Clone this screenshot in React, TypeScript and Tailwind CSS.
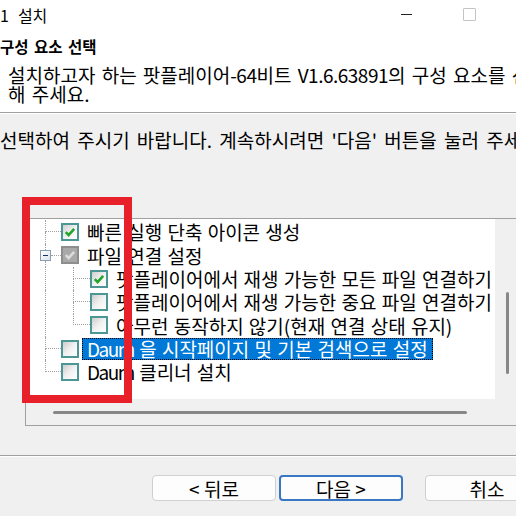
import React from "react";

type CB = "on" | "off" | "mixed";

function Check({ color }: { color: string }) {
  return (
    <svg width="12" height="12" viewBox="0 0 12 12">
      <polyline points="1.8,6.2 4.6,9 10.2,2.8" fill="none" stroke={color} strokeWidth="2.6" />
    </svg>
  );
}

function Box({ state }: { state: CB }) {
  if (state === "mixed")
    return (
      <div className="w-[18px] h-[18px] shrink-0 border-2 border-[#8e8e8e] bg-[#a9a9a9] flex items-center justify-center">
        <Check color="#dcdcdc" />
      </div>
    );
  return (
    <div className="w-[18px] h-[18px] shrink-0 border-2 border-[#4a9795] bg-linear-to-br from-[#cdcdcd] via-[#f1f1f1] to-white flex items-center justify-center">
      {state === "on" && <Check color="#22a52a" />}
    </div>
  );
}

function RootGutter({ kind }: { kind: "branch" | "last" | "pass" | "minus" }) {
  if (kind === "minus")
    return (
      <div className="w-[35px] h-full shrink-0 flex">
        <div className="w-[14px]" />
        <div className="w-[11px] h-full flex flex-col items-center">
          <div className="flex-1 w-0 border-l border-dotted border-[#a0a0a0]" />
          <div className="w-[11px] h-[11px] shrink-0 border border-[#8a9db6] bg-linear-to-br from-white to-[#dde3ea] flex items-center justify-center">
            <div className="w-[5px] h-[1px] bg-[#1c3764]" />
          </div>
          <div className="flex-1 w-0 border-l border-dotted border-[#a0a0a0]" />
        </div>
        <div className="flex-1 flex items-center">
          <div className="w-full border-t border-dotted border-[#a0a0a0]" />
        </div>
      </div>
    );
  if (kind === "pass")
    return (
      <div className="w-[35px] h-full shrink-0 flex">
        <div className="w-[19px]" />
        <div className="h-full border-l border-dotted border-[#a0a0a0]" />
      </div>
    );
  return (
    <div className="w-[35px] h-full shrink-0 flex">
      <div className="w-[19px]" />
      <div className="flex-1 flex flex-col">
        <div className="h-1/2 border-l border-b border-dotted border-[#a0a0a0]" />
        {kind === "branch" ? (
          <div className="h-1/2 border-l border-dotted border-[#a0a0a0]" />
        ) : (
          <div className="h-1/2" />
        )}
      </div>
    </div>
  );
}

function ChildGutter({ last }: { last: boolean }) {
  return (
    <div className="w-[29px] h-full shrink-0 flex">
      <div className="w-[12px]" />
      <div className="flex-1 flex flex-col">
        <div className="h-1/2 border-l border-b border-dotted border-[#a0a0a0]" />
        {last ? <div className="h-1/2" /> : <div className="h-1/2 border-l border-dotted border-[#a0a0a0]" />}
      </div>
    </div>
  );
}

function Label({ children, selected }: { children: React.ReactNode; selected?: boolean }) {
  if (selected)
    return (
      <div className="ml-[3px] h-[22px] px-[4px] flex items-center border border-dotted border-black bg-[#0078d7] text-white whitespace-nowrap">
        {children}
      </div>
    );
  return (
    <div className="ml-[3px] h-[22px] px-[4px] flex items-center border border-transparent text-black whitespace-nowrap">
      {children}
    </div>
  );
}

export default function App() {
  const row = "h-[23.33px] flex items-center";
  return (
    <div className="w-[516px] h-[516px] overflow-hidden relative bg-[#f0f0f0] font-['Noto_Sans_CJK_KR','Noto_Sans',sans-serif] text-black">
      {/* title + header */}
      <div className="bg-white h-[113px] border-b border-[#a0a0a0]">
        <div className="h-[29px] flex items-center text-[16px] leading-none">
          <span className="ml-0">1</span>
          <span className="ml-[9px]">설치</span>
          <div className="ml-auto flex items-center gap-[51px] pr-[40px]">
            <div className="w-[11px] h-[1px] bg-[#222]" />
            <div className="w-[13px] h-[13px] border border-[#c4c4c4] rounded-[1px]" />
          </div>
        </div>
        <div className="mt-[7px] h-[22px] flex items-center text-[15.5px] font-bold leading-none [word-spacing:2px] whitespace-nowrap">
          구성 요소 선택
        </div>
        <div className="mt-[7px] pl-[8px] text-[19px] leading-[19px] [word-spacing:2px] whitespace-nowrap">
          <div className="h-[19px]">
            설치하고자 하는 팟플레이어<span className="tracking-[-0.5px]">-64</span>비트 <span className="tracking-[-0.5px]">V1.6.63891</span>의 구성 요소를 선택
          </div>
          <div className="h-[19px]">해 주세요.</div>
        </div>
      </div>
      <div className="h-[1px] bg-white" />

      {/* instruction */}
      <div className="mt-[15px] h-[20px] flex items-center text-[19px] leading-none [word-spacing:3px] whitespace-nowrap">
        선택하여 주시기 바랍니다. 계속하시려면 '다음' 버튼을 눌러 주세요.
      </div>

      {/* tree box */}
      <div className="ml-[25px] mt-[69px] w-[496px] border-l border-t border-b border-[#a0a0a0] bg-[#f0f0f0]">
        <div className="flex">
          <div className="w-[469px] h-[180px] bg-white pt-[1.3px] text-[19px] leading-none [word-spacing:1px] overflow-hidden">
            <div className={row}>
              <RootGutter kind="branch" />
              <Box state="on" />
              <Label>빠른 실행 단축 아이콘 생성</Label>
            </div>
            <div className={row}>
              <RootGutter kind="minus" />
              <Box state="mixed" />
              <Label>파일 연결 설정</Label>
            </div>
            <div className={row}>
              <RootGutter kind="pass" />
              <ChildGutter last={false} />
              <Box state="on" />
              <Label>팟플레이어에서 재생 가능한 모든 파일 연결하기</Label>
            </div>
            <div className={row}>
              <RootGutter kind="pass" />
              <ChildGutter last={false} />
              <Box state="off" />
              <Label>팟플레이어에서 재생 가능한 중요 파일 연결하기</Label>
            </div>
            <div className={row}>
              <RootGutter kind="pass" />
              <ChildGutter last={true} />
              <Box state="off" />
              <Label>아무런 동작하지 않기(현재 연결 상태 유지)</Label>
            </div>
            <div className={row}>
              <RootGutter kind="branch" />
              <Box state="off" />
              <Label selected>
                <span className="tracking-[-1.5px]">Daum</span>&nbsp;을 시작페이지 및 기본 검색으로 설정
              </Label>
            </div>
            <div className={row}>
              <RootGutter kind="last" />
              <Box state="off" />
              <Label>
                <span className="tracking-[-1.5px]">Daum</span>&nbsp;클리너 설치
              </Label>
            </div>
          </div>
          <div className="w-[25px] h-[180px] pt-[73px] flex justify-center">
            <div className="w-[3px] h-[82px] rounded-full bg-[#878787]" />
          </div>
        </div>
        <div className="h-[26px] pt-[12px] pl-[27px]">
          <div className="w-[414px] h-[3px] rounded-full bg-[#878787]" />
        </div>
      </div>

      {/* separator */}
      <div className="mt-[29px] h-[1px] bg-[#a0a0a0]" />
      <div className="h-[1px] bg-white" />

      {/* buttons */}
      <div className="mt-[18px] pl-[152px] flex text-[19px] leading-none whitespace-nowrap">
        <div className="w-[124px] h-[26px] shrink-0 rounded-[4px] border border-[#d0d0d0] bg-[#fdfdfd] flex items-center justify-center">
          &lt; 뒤로
        </div>
        <div className="ml-[3px] w-[124px] h-[26px] shrink-0 rounded-[4px] border-2 border-[#3877c4] bg-[#fdfdfd] flex items-center justify-center">
          다음 &gt;
        </div>
        <div className="ml-[22px] w-[124px] h-[26px] shrink-0 rounded-[4px] border border-[#d0d0d0] bg-[#fdfdfd] flex items-center justify-center">
          취소
        </div>
      </div>

      {/* red annotation frame */}
      <div className="absolute left-[22px] top-[197px] w-[110px] h-[206px] border-8 border-[#e8202a]" />
    </div>
  );
}
